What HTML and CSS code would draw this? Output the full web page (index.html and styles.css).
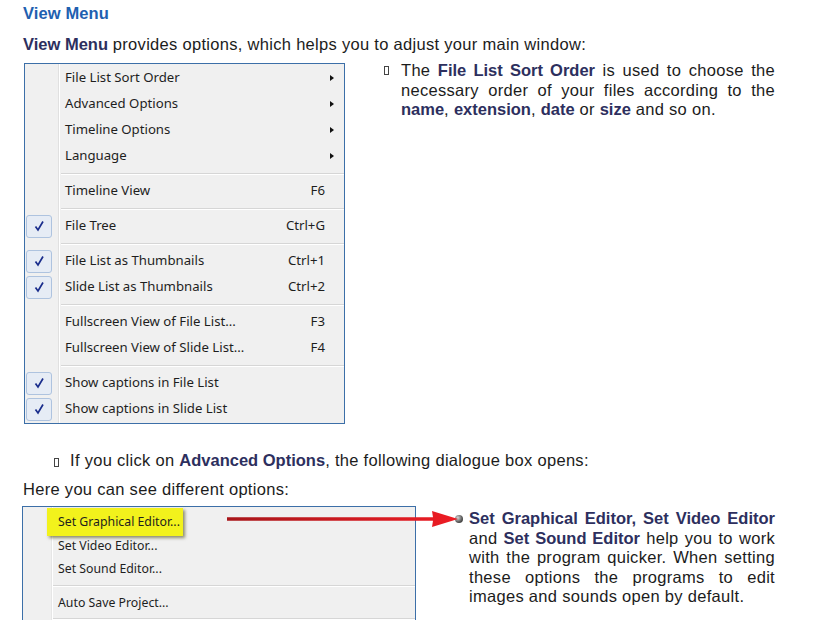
FILE: index.html
```html
<!DOCTYPE html>
<html lang="en">
  <head>
    <meta charset="UTF-8" />
    <title>View Menu</title>
    <link rel="stylesheet" href="styles.css">
  </head>
  <body>
    <h3 class="title">View Menu</h3>
    <p class="intro"><b>View Menu</b> provides options, which helps you to adjust your main window:</p>

    <div class="row">
      <div class="menu menu-view">
        <div class="item"><span class="check"></span><span class="label">File List Sort Order</span><span class="sub"></span></div>
        <div class="item"><span class="check"></span><span class="label">Advanced Options</span><span class="sub"></span></div>
        <div class="item"><span class="check"></span><span class="label">Timeline Options</span><span class="sub"></span></div>
        <div class="item"><span class="check"></span><span class="label">Language</span><span class="sub"></span></div>
        <div class="sep"></div>
        <div class="item"><span class="check"></span><span class="label">Timeline View</span><span class="key">F6</span></div>
        <div class="sep"></div>
        <div class="item"><span class="check on"><svg viewBox="0 0 12 12"><path d="M2.5 6.5 L5 10 L10 1.5" /></svg></span><span class="label">File Tree</span><span class="key">Ctrl+G</span></div>
        <div class="sep"></div>
        <div class="item"><span class="check on"><svg viewBox="0 0 12 12"><path d="M2.5 6.5 L5 10 L10 1.5" /></svg></span><span class="label">File List as Thumbnails</span><span class="key">Ctrl+1</span></div>
        <div class="item"><span class="check on"><svg viewBox="0 0 12 12"><path d="M2.5 6.5 L5 10 L10 1.5" /></svg></span><span class="label">Slide List as Thumbnails</span><span class="key">Ctrl+2</span></div>
        <div class="sep"></div>
        <div class="item"><span class="check"></span><span class="label">Fullscreen View of File List...</span><span class="key">F3</span></div>
        <div class="item"><span class="check"></span><span class="label">Fullscreen View of Slide List...</span><span class="key">F4</span></div>
        <div class="sep"></div>
        <div class="item"><span class="check on"><svg viewBox="0 0 12 12"><path d="M2.5 6.5 L5 10 L10 1.5" /></svg></span><span class="label">Show captions in File List</span></div>
        <div class="item"><span class="check on"><svg viewBox="0 0 12 12"><path d="M2.5 6.5 L5 10 L10 1.5" /></svg></span><span class="label">Show captions in Slide List</span></div>
      </div>

      <p class="note note-sort">
        <span class="box-bullet"></span>
        <span class="note-text">The <b>File List Sort Order</b> is used to choose the necessary order of your files according to the <b>name</b>, <b>extension</b>, <b>date</b> or <b>size</b> and so on.</span>
      </p>
    </div>

    <p class="bullet-line"><span class="box-bullet"></span>If you click on <b>Advanced Options</b>, the following dialogue box opens:</p>
    <p class="plain">Here you can see different options:</p>

    <div class="row row-advanced">
      <div class="menu menu-adv">
        <div class="item"><span class="label hl">Set Graphical Editor...</span></div>
        <div class="item"><span class="label">Set Video Editor...</span></div>
        <div class="item"><span class="label">Set Sound Editor...</span></div>
        <div class="sep"></div>
        <div class="item"><span class="label">Auto Save Project...</span></div>
        <div class="sep"></div>
      </div>

      <!-- red pointer drawn over the screenshot -->
      <svg class="pointer" width="232" height="20" viewBox="0 0 232 20">
        <defs>
          <linearGradient id="redfade" x1="0" x2="1" y1="0" y2="0">
            <stop offset="0" stop-color="#a8161a" />
            <stop offset="1" stop-color="#ee1c24" />
          </linearGradient>
        </defs>
        <path d="M0 8.2 L206 8.2 L205 2 L231 10 L205 18 L206 11.8 L0 11.8 Z" fill="url(#redfade)" />
      </svg>

      <p class="note note-editors">
        <span class="ball"></span>
        <span class="note-text"><b>Set Graphical Editor, Set Video Editor</b> and <b>Set Sound Editor</b> help you to work with the program quicker. When setting these options the programs to edit images and sounds open by default.</span>
      </p>
    </div>
  </body>
</html>
```

FILE: styles.css
```css
html {
  overflow: hidden;
}

body {
  margin: 0;
  padding: 0 0 0 23px;
  font-family: "Liberation Sans", Arial, sans-serif;
  font-size: 16.5px;
  line-height: 19.5px;
  letter-spacing: 0.3px;
  color: #1c1c1c;
  background: #fff;
}

b {
  color: #2d2f5e;
  letter-spacing: 0;
}

.title {
  margin: 4px 0 0;
  font-size: 16.5px;
  line-height: 19.5px;
  letter-spacing: 0.1px;
  color: #1e60b0;
}

.intro {
  margin: 11px 0 0;
}

.row {
  display: flex;
  align-items: flex-start;
  margin-top: 9px;
}

/* windows menu look */
.menu {
  font-family: "Noto Sans", "Open Sans", sans-serif;
  font-size: 13.2px;
  letter-spacing: 0;
  color: #1e1e1e;
  background-color: #f0f0f0;
  border: 1px solid #3c6fa8;
  padding: 0 0 1px;
  box-sizing: border-box;
  flex: none;
}

.menu-view {
  width: 321px;
  margin-left: 1px;
  padding-top: 1px;
  background-image: linear-gradient(to right, transparent 33px, #e0e0e0 33px, #e0e0e0 34px, #fff 34px, #fff 35px, transparent 35px);
}

.item {
  display: flex;
  align-items: center;
  height: 26px;
}

.check {
  width: 26px;
  height: 23px;
  margin: 0 7px 0 1px;
  box-sizing: border-box;
  flex: none;
  display: flex;
  align-items: center;
  justify-content: center;
}

.check.on {
  border: 1px solid #aec3df;
  border-radius: 3px;
  background-color: #e6ecf5;
}

.check svg {
  width: 12px;
  height: 12px;
  fill: none;
  stroke: #1a2d8c;
  stroke-width: 1.7;
}

.label {
  flex: 1;
  padding-left: 6px;
  white-space: nowrap;
}

.key {
  padding-right: 19px;
}

.sub {
  width: 0;
  height: 0;
  border-top: 3.5px solid transparent;
  border-bottom: 3.5px solid transparent;
  border-left: 4px solid #111;
  margin-right: 10px;
}

.sep {
  height: 9px;
  margin-left: 36px;
  box-sizing: border-box;
  padding-top: 4px;
}

.sep::before {
  content: "";
  display: block;
  border-top: 1px solid #d6d6d6;
  border-bottom: 1px solid #fff;
}

.note {
  display: flex;
  margin: -2px 0 0 39px;
  text-align: justify;
}

.note-sort {
  width: 391px;
}

.note-text {
  flex: 1;
}

.box-bullet {
  display: inline-block;
  width: 5px;
  height: 9px;
  border: 1px solid #444;
  box-sizing: border-box;
  margin: 5px 12px 0 0;
  flex: none;
}

.bullet-line {
  margin: 27px 0 0 31px;
}

.bullet-line .box-bullet {
  margin: 0 11px 0 0;
  vertical-align: -1px;
}

.plain {
  margin: 9px 0 0;
}

.row-advanced {
  position: relative;
  margin-top: 7px;
}

.menu-adv {
  width: 394px;
  margin-left: -1px;
  padding-top: 3px;
  font-size: 12.3px;
  background-image: linear-gradient(to right, transparent 28px, #e6e6e6 28px, #e6e6e6 29px, #fff 29px, #fff 30px, transparent 30px);
}

.menu-adv .item {
  height: 23.5px;
}

.menu-adv .label {
  padding-left: 35px;
}

.menu-adv .sep {
  height: 10px;
  margin-left: 30px;
}

.menu-adv .label.hl {
  flex: none;
  margin-left: 24px;
  padding: 4px 3px 5px 11px;
  background-color: #f2f21c;
  box-shadow: 2px 2px 3px rgba(60, 60, 0, 0.55);
}

.pointer {
  position: absolute;
  left: 204px;
  top: 3px;
}

.note-editors {
  width: 320px;
  margin: 3px 0 0 39px;
}

.ball {
  flex: none;
  width: 8px;
  height: 8px;
  border-radius: 50%;
  margin: 6px 6px 0 0;
  background: radial-gradient(circle at 35% 35%, #d8d8d8, #555 60%, #222);
}
```
